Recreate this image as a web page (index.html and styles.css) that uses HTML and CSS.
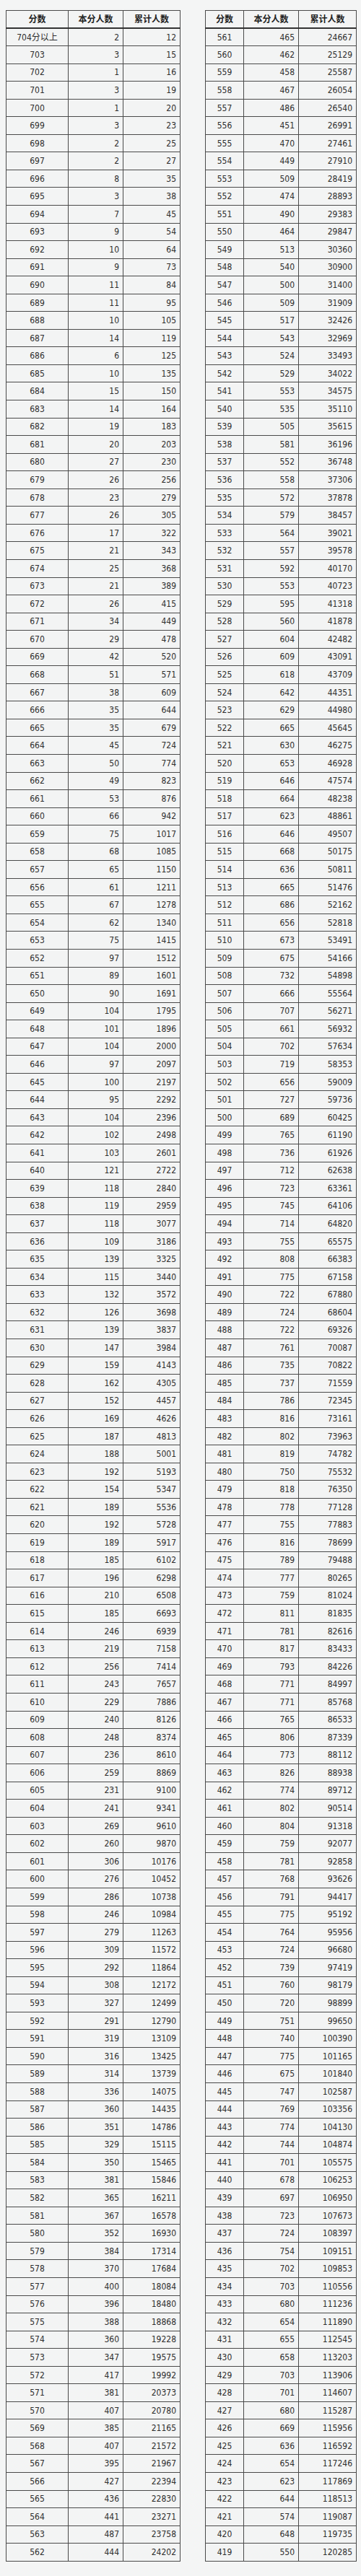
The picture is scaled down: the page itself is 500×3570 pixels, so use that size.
FILE: index.html
```html
<!DOCTYPE html>
<html lang="zh-CN">
<head>
<meta charset="utf-8">
<title>分数段统计表</title>
<link rel="stylesheet" href="styles.css">
</head>
<body>
<div class="page">
<table class="score-table left">
<colgroup><col class="c1"><col class="c2"><col class="c3"></colgroup>
<thead><tr><th>分数</th><th>本分人数</th><th>累计人数</th></tr></thead>
<tbody>
<tr><td>704分以上</td><td>2</td><td>12</td></tr>
<tr><td>703</td><td>3</td><td>15</td></tr>
<tr><td>702</td><td>1</td><td>16</td></tr>
<tr><td>701</td><td>3</td><td>19</td></tr>
<tr><td>700</td><td>1</td><td>20</td></tr>
<tr><td>699</td><td>3</td><td>23</td></tr>
<tr><td>698</td><td>2</td><td>25</td></tr>
<tr><td>697</td><td>2</td><td>27</td></tr>
<tr><td>696</td><td>8</td><td>35</td></tr>
<tr><td>695</td><td>3</td><td>38</td></tr>
<tr><td>694</td><td>7</td><td>45</td></tr>
<tr><td>693</td><td>9</td><td>54</td></tr>
<tr><td>692</td><td>10</td><td>64</td></tr>
<tr><td>691</td><td>9</td><td>73</td></tr>
<tr><td>690</td><td>11</td><td>84</td></tr>
<tr><td>689</td><td>11</td><td>95</td></tr>
<tr><td>688</td><td>10</td><td>105</td></tr>
<tr><td>687</td><td>14</td><td>119</td></tr>
<tr><td>686</td><td>6</td><td>125</td></tr>
<tr><td>685</td><td>10</td><td>135</td></tr>
<tr><td>684</td><td>15</td><td>150</td></tr>
<tr><td>683</td><td>14</td><td>164</td></tr>
<tr><td>682</td><td>19</td><td>183</td></tr>
<tr><td>681</td><td>20</td><td>203</td></tr>
<tr><td>680</td><td>27</td><td>230</td></tr>
<tr><td>679</td><td>26</td><td>256</td></tr>
<tr><td>678</td><td>23</td><td>279</td></tr>
<tr><td>677</td><td>26</td><td>305</td></tr>
<tr><td>676</td><td>17</td><td>322</td></tr>
<tr><td>675</td><td>21</td><td>343</td></tr>
<tr><td>674</td><td>25</td><td>368</td></tr>
<tr><td>673</td><td>21</td><td>389</td></tr>
<tr><td>672</td><td>26</td><td>415</td></tr>
<tr><td>671</td><td>34</td><td>449</td></tr>
<tr><td>670</td><td>29</td><td>478</td></tr>
<tr><td>669</td><td>42</td><td>520</td></tr>
<tr><td>668</td><td>51</td><td>571</td></tr>
<tr><td>667</td><td>38</td><td>609</td></tr>
<tr><td>666</td><td>35</td><td>644</td></tr>
<tr><td>665</td><td>35</td><td>679</td></tr>
<tr><td>664</td><td>45</td><td>724</td></tr>
<tr><td>663</td><td>50</td><td>774</td></tr>
<tr><td>662</td><td>49</td><td>823</td></tr>
<tr><td>661</td><td>53</td><td>876</td></tr>
<tr><td>660</td><td>66</td><td>942</td></tr>
<tr><td>659</td><td>75</td><td>1017</td></tr>
<tr><td>658</td><td>68</td><td>1085</td></tr>
<tr><td>657</td><td>65</td><td>1150</td></tr>
<tr><td>656</td><td>61</td><td>1211</td></tr>
<tr><td>655</td><td>67</td><td>1278</td></tr>
<tr><td>654</td><td>62</td><td>1340</td></tr>
<tr><td>653</td><td>75</td><td>1415</td></tr>
<tr><td>652</td><td>97</td><td>1512</td></tr>
<tr><td>651</td><td>89</td><td>1601</td></tr>
<tr><td>650</td><td>90</td><td>1691</td></tr>
<tr><td>649</td><td>104</td><td>1795</td></tr>
<tr><td>648</td><td>101</td><td>1896</td></tr>
<tr><td>647</td><td>104</td><td>2000</td></tr>
<tr><td>646</td><td>97</td><td>2097</td></tr>
<tr><td>645</td><td>100</td><td>2197</td></tr>
<tr><td>644</td><td>95</td><td>2292</td></tr>
<tr><td>643</td><td>104</td><td>2396</td></tr>
<tr><td>642</td><td>102</td><td>2498</td></tr>
<tr><td>641</td><td>103</td><td>2601</td></tr>
<tr><td>640</td><td>121</td><td>2722</td></tr>
<tr><td>639</td><td>118</td><td>2840</td></tr>
<tr><td>638</td><td>119</td><td>2959</td></tr>
<tr><td>637</td><td>118</td><td>3077</td></tr>
<tr><td>636</td><td>109</td><td>3186</td></tr>
<tr><td>635</td><td>139</td><td>3325</td></tr>
<tr><td>634</td><td>115</td><td>3440</td></tr>
<tr><td>633</td><td>132</td><td>3572</td></tr>
<tr><td>632</td><td>126</td><td>3698</td></tr>
<tr><td>631</td><td>139</td><td>3837</td></tr>
<tr><td>630</td><td>147</td><td>3984</td></tr>
<tr><td>629</td><td>159</td><td>4143</td></tr>
<tr><td>628</td><td>162</td><td>4305</td></tr>
<tr><td>627</td><td>152</td><td>4457</td></tr>
<tr><td>626</td><td>169</td><td>4626</td></tr>
<tr><td>625</td><td>187</td><td>4813</td></tr>
<tr><td>624</td><td>188</td><td>5001</td></tr>
<tr><td>623</td><td>192</td><td>5193</td></tr>
<tr><td>622</td><td>154</td><td>5347</td></tr>
<tr><td>621</td><td>189</td><td>5536</td></tr>
<tr><td>620</td><td>192</td><td>5728</td></tr>
<tr><td>619</td><td>189</td><td>5917</td></tr>
<tr><td>618</td><td>185</td><td>6102</td></tr>
<tr><td>617</td><td>196</td><td>6298</td></tr>
<tr><td>616</td><td>210</td><td>6508</td></tr>
<tr><td>615</td><td>185</td><td>6693</td></tr>
<tr><td>614</td><td>246</td><td>6939</td></tr>
<tr><td>613</td><td>219</td><td>7158</td></tr>
<tr><td>612</td><td>256</td><td>7414</td></tr>
<tr><td>611</td><td>243</td><td>7657</td></tr>
<tr><td>610</td><td>229</td><td>7886</td></tr>
<tr><td>609</td><td>240</td><td>8126</td></tr>
<tr><td>608</td><td>248</td><td>8374</td></tr>
<tr><td>607</td><td>236</td><td>8610</td></tr>
<tr><td>606</td><td>259</td><td>8869</td></tr>
<tr><td>605</td><td>231</td><td>9100</td></tr>
<tr><td>604</td><td>241</td><td>9341</td></tr>
<tr><td>603</td><td>269</td><td>9610</td></tr>
<tr><td>602</td><td>260</td><td>9870</td></tr>
<tr><td>601</td><td>306</td><td>10176</td></tr>
<tr><td>600</td><td>276</td><td>10452</td></tr>
<tr><td>599</td><td>286</td><td>10738</td></tr>
<tr><td>598</td><td>246</td><td>10984</td></tr>
<tr><td>597</td><td>279</td><td>11263</td></tr>
<tr><td>596</td><td>309</td><td>11572</td></tr>
<tr><td>595</td><td>292</td><td>11864</td></tr>
<tr><td>594</td><td>308</td><td>12172</td></tr>
<tr><td>593</td><td>327</td><td>12499</td></tr>
<tr><td>592</td><td>291</td><td>12790</td></tr>
<tr><td>591</td><td>319</td><td>13109</td></tr>
<tr><td>590</td><td>316</td><td>13425</td></tr>
<tr><td>589</td><td>314</td><td>13739</td></tr>
<tr><td>588</td><td>336</td><td>14075</td></tr>
<tr><td>587</td><td>360</td><td>14435</td></tr>
<tr><td>586</td><td>351</td><td>14786</td></tr>
<tr><td>585</td><td>329</td><td>15115</td></tr>
<tr><td>584</td><td>350</td><td>15465</td></tr>
<tr><td>583</td><td>381</td><td>15846</td></tr>
<tr><td>582</td><td>365</td><td>16211</td></tr>
<tr><td>581</td><td>367</td><td>16578</td></tr>
<tr><td>580</td><td>352</td><td>16930</td></tr>
<tr><td>579</td><td>384</td><td>17314</td></tr>
<tr><td>578</td><td>370</td><td>17684</td></tr>
<tr><td>577</td><td>400</td><td>18084</td></tr>
<tr><td>576</td><td>396</td><td>18480</td></tr>
<tr><td>575</td><td>388</td><td>18868</td></tr>
<tr><td>574</td><td>360</td><td>19228</td></tr>
<tr><td>573</td><td>347</td><td>19575</td></tr>
<tr><td>572</td><td>417</td><td>19992</td></tr>
<tr><td>571</td><td>381</td><td>20373</td></tr>
<tr><td>570</td><td>407</td><td>20780</td></tr>
<tr><td>569</td><td>385</td><td>21165</td></tr>
<tr><td>568</td><td>407</td><td>21572</td></tr>
<tr><td>567</td><td>395</td><td>21967</td></tr>
<tr><td>566</td><td>427</td><td>22394</td></tr>
<tr><td>565</td><td>436</td><td>22830</td></tr>
<tr><td>564</td><td>441</td><td>23271</td></tr>
<tr><td>563</td><td>487</td><td>23758</td></tr>
<tr><td>562</td><td>444</td><td>24202</td></tr>
</tbody>
</table>
<table class="score-table right">
<colgroup><col class="c1"><col class="c2"><col class="c3"></colgroup>
<thead><tr><th>分数</th><th>本分人数</th><th>累计人数</th></tr></thead>
<tbody>
<tr><td>561</td><td>465</td><td>24667</td></tr>
<tr><td>560</td><td>462</td><td>25129</td></tr>
<tr><td>559</td><td>458</td><td>25587</td></tr>
<tr><td>558</td><td>467</td><td>26054</td></tr>
<tr><td>557</td><td>486</td><td>26540</td></tr>
<tr><td>556</td><td>451</td><td>26991</td></tr>
<tr><td>555</td><td>470</td><td>27461</td></tr>
<tr><td>554</td><td>449</td><td>27910</td></tr>
<tr><td>553</td><td>509</td><td>28419</td></tr>
<tr><td>552</td><td>474</td><td>28893</td></tr>
<tr><td>551</td><td>490</td><td>29383</td></tr>
<tr><td>550</td><td>464</td><td>29847</td></tr>
<tr><td>549</td><td>513</td><td>30360</td></tr>
<tr><td>548</td><td>540</td><td>30900</td></tr>
<tr><td>547</td><td>500</td><td>31400</td></tr>
<tr><td>546</td><td>509</td><td>31909</td></tr>
<tr><td>545</td><td>517</td><td>32426</td></tr>
<tr><td>544</td><td>543</td><td>32969</td></tr>
<tr><td>543</td><td>524</td><td>33493</td></tr>
<tr><td>542</td><td>529</td><td>34022</td></tr>
<tr><td>541</td><td>553</td><td>34575</td></tr>
<tr><td>540</td><td>535</td><td>35110</td></tr>
<tr><td>539</td><td>505</td><td>35615</td></tr>
<tr><td>538</td><td>581</td><td>36196</td></tr>
<tr><td>537</td><td>552</td><td>36748</td></tr>
<tr><td>536</td><td>558</td><td>37306</td></tr>
<tr><td>535</td><td>572</td><td>37878</td></tr>
<tr><td>534</td><td>579</td><td>38457</td></tr>
<tr><td>533</td><td>564</td><td>39021</td></tr>
<tr><td>532</td><td>557</td><td>39578</td></tr>
<tr><td>531</td><td>592</td><td>40170</td></tr>
<tr><td>530</td><td>553</td><td>40723</td></tr>
<tr><td>529</td><td>595</td><td>41318</td></tr>
<tr><td>528</td><td>560</td><td>41878</td></tr>
<tr><td>527</td><td>604</td><td>42482</td></tr>
<tr><td>526</td><td>609</td><td>43091</td></tr>
<tr><td>525</td><td>618</td><td>43709</td></tr>
<tr><td>524</td><td>642</td><td>44351</td></tr>
<tr><td>523</td><td>629</td><td>44980</td></tr>
<tr><td>522</td><td>665</td><td>45645</td></tr>
<tr><td>521</td><td>630</td><td>46275</td></tr>
<tr><td>520</td><td>653</td><td>46928</td></tr>
<tr><td>519</td><td>646</td><td>47574</td></tr>
<tr><td>518</td><td>664</td><td>48238</td></tr>
<tr><td>517</td><td>623</td><td>48861</td></tr>
<tr><td>516</td><td>646</td><td>49507</td></tr>
<tr><td>515</td><td>668</td><td>50175</td></tr>
<tr><td>514</td><td>636</td><td>50811</td></tr>
<tr><td>513</td><td>665</td><td>51476</td></tr>
<tr><td>512</td><td>686</td><td>52162</td></tr>
<tr><td>511</td><td>656</td><td>52818</td></tr>
<tr><td>510</td><td>673</td><td>53491</td></tr>
<tr><td>509</td><td>675</td><td>54166</td></tr>
<tr><td>508</td><td>732</td><td>54898</td></tr>
<tr><td>507</td><td>666</td><td>55564</td></tr>
<tr><td>506</td><td>707</td><td>56271</td></tr>
<tr><td>505</td><td>661</td><td>56932</td></tr>
<tr><td>504</td><td>702</td><td>57634</td></tr>
<tr><td>503</td><td>719</td><td>58353</td></tr>
<tr><td>502</td><td>656</td><td>59009</td></tr>
<tr><td>501</td><td>727</td><td>59736</td></tr>
<tr><td>500</td><td>689</td><td>60425</td></tr>
<tr><td>499</td><td>765</td><td>61190</td></tr>
<tr><td>498</td><td>736</td><td>61926</td></tr>
<tr><td>497</td><td>712</td><td>62638</td></tr>
<tr><td>496</td><td>723</td><td>63361</td></tr>
<tr><td>495</td><td>745</td><td>64106</td></tr>
<tr><td>494</td><td>714</td><td>64820</td></tr>
<tr><td>493</td><td>755</td><td>65575</td></tr>
<tr><td>492</td><td>808</td><td>66383</td></tr>
<tr><td>491</td><td>775</td><td>67158</td></tr>
<tr><td>490</td><td>722</td><td>67880</td></tr>
<tr><td>489</td><td>724</td><td>68604</td></tr>
<tr><td>488</td><td>722</td><td>69326</td></tr>
<tr><td>487</td><td>761</td><td>70087</td></tr>
<tr><td>486</td><td>735</td><td>70822</td></tr>
<tr><td>485</td><td>737</td><td>71559</td></tr>
<tr><td>484</td><td>786</td><td>72345</td></tr>
<tr><td>483</td><td>816</td><td>73161</td></tr>
<tr><td>482</td><td>802</td><td>73963</td></tr>
<tr><td>481</td><td>819</td><td>74782</td></tr>
<tr><td>480</td><td>750</td><td>75532</td></tr>
<tr><td>479</td><td>818</td><td>76350</td></tr>
<tr><td>478</td><td>778</td><td>77128</td></tr>
<tr><td>477</td><td>755</td><td>77883</td></tr>
<tr><td>476</td><td>816</td><td>78699</td></tr>
<tr><td>475</td><td>789</td><td>79488</td></tr>
<tr><td>474</td><td>777</td><td>80265</td></tr>
<tr><td>473</td><td>759</td><td>81024</td></tr>
<tr><td>472</td><td>811</td><td>81835</td></tr>
<tr><td>471</td><td>781</td><td>82616</td></tr>
<tr><td>470</td><td>817</td><td>83433</td></tr>
<tr><td>469</td><td>793</td><td>84226</td></tr>
<tr><td>468</td><td>771</td><td>84997</td></tr>
<tr><td>467</td><td>771</td><td>85768</td></tr>
<tr><td>466</td><td>765</td><td>86533</td></tr>
<tr><td>465</td><td>806</td><td>87339</td></tr>
<tr><td>464</td><td>773</td><td>88112</td></tr>
<tr><td>463</td><td>826</td><td>88938</td></tr>
<tr><td>462</td><td>774</td><td>89712</td></tr>
<tr><td>461</td><td>802</td><td>90514</td></tr>
<tr><td>460</td><td>804</td><td>91318</td></tr>
<tr><td>459</td><td>759</td><td>92077</td></tr>
<tr><td>458</td><td>781</td><td>92858</td></tr>
<tr><td>457</td><td>768</td><td>93626</td></tr>
<tr><td>456</td><td>791</td><td>94417</td></tr>
<tr><td>455</td><td>775</td><td>95192</td></tr>
<tr><td>454</td><td>764</td><td>95956</td></tr>
<tr><td>453</td><td>724</td><td>96680</td></tr>
<tr><td>452</td><td>739</td><td>97419</td></tr>
<tr><td>451</td><td>760</td><td>98179</td></tr>
<tr><td>450</td><td>720</td><td>98899</td></tr>
<tr><td>449</td><td>751</td><td>99650</td></tr>
<tr><td>448</td><td>740</td><td>100390</td></tr>
<tr><td>447</td><td>775</td><td>101165</td></tr>
<tr><td>446</td><td>675</td><td>101840</td></tr>
<tr><td>445</td><td>747</td><td>102587</td></tr>
<tr><td>444</td><td>769</td><td>103356</td></tr>
<tr><td>443</td><td>774</td><td>104130</td></tr>
<tr><td>442</td><td>744</td><td>104874</td></tr>
<tr><td>441</td><td>701</td><td>105575</td></tr>
<tr><td>440</td><td>678</td><td>106253</td></tr>
<tr><td>439</td><td>697</td><td>106950</td></tr>
<tr><td>438</td><td>723</td><td>107673</td></tr>
<tr><td>437</td><td>724</td><td>108397</td></tr>
<tr><td>436</td><td>754</td><td>109151</td></tr>
<tr><td>435</td><td>702</td><td>109853</td></tr>
<tr><td>434</td><td>703</td><td>110556</td></tr>
<tr><td>433</td><td>680</td><td>111236</td></tr>
<tr><td>432</td><td>654</td><td>111890</td></tr>
<tr><td>431</td><td>655</td><td>112545</td></tr>
<tr><td>430</td><td>658</td><td>113203</td></tr>
<tr><td>429</td><td>703</td><td>113906</td></tr>
<tr><td>428</td><td>701</td><td>114607</td></tr>
<tr><td>427</td><td>680</td><td>115287</td></tr>
<tr><td>426</td><td>669</td><td>115956</td></tr>
<tr><td>425</td><td>636</td><td>116592</td></tr>
<tr><td>424</td><td>654</td><td>117246</td></tr>
<tr><td>423</td><td>623</td><td>117869</td></tr>
<tr><td>422</td><td>644</td><td>118513</td></tr>
<tr><td>421</td><td>574</td><td>119087</td></tr>
<tr><td>420</td><td>648</td><td>119735</td></tr>
<tr><td>419</td><td>550</td><td>120285</td></tr>
</tbody>
</table>
</div>
</body>
</html>
```
FILE: styles.css
```css
html, body {
  margin: 0;
  padding: 0;
  background: #f4f5f5;
}

.page {
  display: flex;
  align-items: flex-start;
  gap: 34px;
  padding: 14px 0 0 8px;
  font-family: "DejaVu Sans Condensed", "DejaVu Sans", "Noto Sans CJK SC", sans-serif;
  font-size: 12px;
  color: #2e2e2e;
}

.score-table {
  border-collapse: collapse;
  table-layout: fixed;
  background: #f3f4f4;
  border: 1px solid #555;
}

.score-table.left { width: 241px; }
.score-table.right { width: 209px; }

.score-table.left .c1 { width: 86px; }
.score-table.left .c2 { width: 76px; }
.score-table.left .c3 { width: 79px; }

.score-table.right .c1 { width: 53px; }
.score-table.right .c2 { width: 76px; }
.score-table.right .c3 { width: 80px; }

.score-table tr {
  height: 24.555px;
}

.score-table th,
.score-table td {
  border: 1px solid #4a4a4a;
  padding: 0 5px;
  line-height: 14px;
  white-space: nowrap;
  overflow: hidden;
}

.score-table th {
  font-weight: bold;
  text-align: center;
  color: #222;
  border-bottom: 2px solid #333;
}

.score-table td:first-child {
  text-align: center;
  padding: 0 2px;
}

.score-table td:nth-child(2),
.score-table td:nth-child(3) {
  text-align: right;
}

.score-table td:nth-child(3),
.score-table th:nth-child(3) {
  border-left: 1px solid #111;
}
```
